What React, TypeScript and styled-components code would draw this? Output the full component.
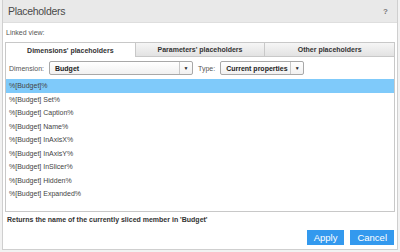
import React from "react";
import styled, { createGlobalStyle } from "styled-components";

const GlobalStyle = createGlobalStyle`
  html, body {
    margin: 0;
    padding: 0;
    background: #f2f2f2;
  }
  body {
    font-family: "Liberation Sans", Arial, sans-serif;
  }
`;

const items = [
  "%[Budget]%",
  "%[Budget] Set%",
  "%[Budget] Caption%",
  "%[Budget] Name%",
  "%[Budget] InAxisX%",
  "%[Budget] InAxisY%",
  "%[Budget] InSlicer%",
  "%[Budget] Hidden%",
  "%[Budget] Expanded%",
];

const tabs = [
  "Dimensions' placeholders",
  "Parameters' placeholders",
  "Other placeholders",
];

const App: React.FC = () => {
  return (
    <>
      <GlobalStyle />
      <Dialog>
        <TitleBar>
          <Title>Placeholders</Title>
          <Help>?</Help>
        </TitleBar>
        <Body>
          <Label>Linked view:</Label>
          <Tabs>
            {tabs.map((t, i) => (
              <Tab key={t} active={i === 0}>
                {t}
              </Tab>
            ))}
          </Tabs>
          <Panel>
            <Toolbar>
              <FieldLabel>Dimension:</FieldLabel>
              <Select width={144}>
                <SelectValue>Budget</SelectValue>
                <Arrow>▼</Arrow>
              </Select>
              <FieldLabel>Type:</FieldLabel>
              <Select width={84}>
                <SelectValue>Current properties</SelectValue>
                <Arrow>▼</Arrow>
              </Select>
            </Toolbar>
            <List>
              {items.map((it, i) => (
                <Item key={it} selected={i === 0}>
                  {it}
                </Item>
              ))}
            </List>
          </Panel>
          <Description>
            Returns the name of the currently sliced member in 'Budget'
          </Description>
          <Footer>
            <Button>Apply</Button>
            <Button>Cancel</Button>
          </Footer>
        </Body>
      </Dialog>
    </>
  );
};

export default App;

const Dialog = styled.div`
  margin-left: 2px;
  width: 394px;
  height: 249px;
  border: 1px solid #cfcfcf;
  border-top: none;
  background: #fff;
  display: flex;
  flex-direction: column;
`;

const TitleBar = styled.div`
  height: 22px;
  background: #e9e9e9;
  border-bottom: 1px solid #dedede;
  display: flex;
  align-items: center;
  justify-content: space-between;
  padding: 0 9px 0 5px;
  flex-shrink: 0;
`;

const Title = styled.div`
  font-size: 10.5px;
  letter-spacing: -0.3px;
  color: #4a4a4a;
`;

const Help = styled.div`
  font-size: 8px;
  font-weight: bold;
  color: #777;
`;

const Body = styled.div`
  flex: 1;
  display: flex;
  flex-direction: column;
  padding: 0 2px;
`;

const Label = styled.div`
  font-size: 7px;
  color: #555;
  height: 19px;
  line-height: 19px;
  padding-left: 1px;
`;

const Tabs = styled.div`
  display: flex;
  height: 15px;
`;

const Tab = styled.div<{ active?: boolean }>`
  flex: 1;
  font-size: 7px;
  font-weight: bold;
  color: #333;
  display: flex;
  align-items: center;
  justify-content: center;
  border: 1px solid #c8c8c8;
  border-left-width: ${(p) => (p.active ? "1px" : "0")};
  border-bottom: ${(p) => (p.active ? "none" : "1px solid #c8c8c8")};
  background: ${(p) =>
    p.active ? "#fff" : "linear-gradient(#f6f6f6, #e2e2e2)"};
`;

const Panel = styled.div`
  border: 1px solid #c8c8c8;
  border-top: none;
  height: 154px;
  display: flex;
  flex-direction: column;
`;

const Toolbar = styled.div`
  height: 22px;
  display: flex;
  align-items: center;
  padding-left: 3px;
  gap: 5px;
`;

const FieldLabel = styled.div`
  font-size: 7px;
  color: #555;
`;

const Select = styled.div<{ width: number }>`
  width: ${(p) => p.width}px;
  height: 14px;
  border: 1px solid #a8a8a8;
  border-radius: 2px;
  background: linear-gradient(#fff, #f1f1f1);
  display: flex;
  align-items: center;
  box-sizing: border-box;
`;

const SelectValue = styled.div`
  flex: 1;
  font-size: 7px;
  font-weight: bold;
  color: #222;
  padding-left: 5px;
`;

const Arrow = styled.div`
  width: 12px;
  height: 100%;
  border-left: 1px solid #c8c8c8;
  font-size: 5px;
  color: #222;
  display: flex;
  align-items: center;
  justify-content: center;
`;

const List = styled.div`
  display: flex;
  flex-direction: column;
`;

const Item = styled.div<{ selected?: boolean }>`
  height: 13.5px;
  line-height: 13.5px;
  font-size: 7px;
  color: #444;
  padding-left: 3px;
  background: ${(p) => (p.selected ? "#7fcafa" : "transparent")};
`;

const Description = styled.div`
  font-size: 7px;
  font-weight: bold;
  color: #333;
  padding: 4px 0 0 2px;
  height: 13px;
`;

const Footer = styled.div`
  display: flex;
  justify-content: flex-end;
  gap: 6px;
  padding: 1px 1px 0 0;
`;

const Button = styled.div`
  background: #3399ee;
  color: #fff;
  font-size: 9.5px;
  height: 15px;
  padding: 0 7px;
  display: flex;
  align-items: center;
`;
